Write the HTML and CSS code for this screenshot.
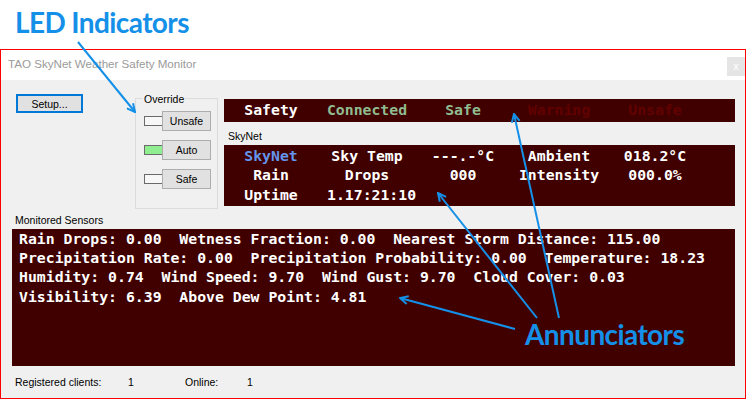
FILE: index.html
```html
<!DOCTYPE html>
<html>
<head>
<meta charset="utf-8">
<link rel="stylesheet" href="styles.css">
</head>
<body>
<div class="header"><h1 class="callout">LED Indicators</h1></div>
<div class="window">
  <div class="titlebar">
    <span class="title">TAO SkyNet Weather Safety Monitor</span>
    <span class="close">x</span>
  </div>
  <div class="client">
    <div class="top">
      <button class="btn setup">Setup...</button>
      <div class="group">
        <div class="group-label">Override</div>
        <div class="rows">
          <div class="row"><span class="led"></span><button class="btn obtn">Unsafe</button></div>
          <div class="row"><span class="led on"></span><button class="btn obtn">Auto</button></div>
          <div class="row"><span class="led"></span><button class="btn obtn">Safe</button></div>
        </div>
      </div>
      <div class="status">
        <div class="panel safety grid5">
          <span class="w">Safety</span>
          <span class="g">Connected</span>
          <span class="g">Safe</span>
          <span class="d">Warning</span>
          <span class="d">Unsafe</span>
        </div>
        <div class="sublabel">SkyNet</div>
        <div class="panel skynet grid5">
          <span class="b">SkyNet</span>
          <span class="w">Sky Temp</span>
          <span class="w">---.-°C</span>
          <span class="w">Ambient</span>
          <span class="w">018.2°C</span>
          <span class="w">Rain</span>
          <span class="w">Drops</span>
          <span class="w">000</span>
          <span class="w">Intensity</span>
          <span class="w">000.0%</span>
          <span class="w">Uptime</span>
          <span class="w nudge">1.17:21:10</span>
        </div>
      </div>
    </div>
    <div class="sensors-label">Monitored Sensors</div>
    <div class="panel sensors">
      <div class="line">Rain Drops: 0.00  Wetness Fraction: 0.00  Nearest Storm Distance: 115.00</div>
      <div class="line">Precipitation Rate: 0.00  Precipitation Probability: 0.00  Temperature: 18.23</div>
      <div class="line">Humidity: 0.74  Wind Speed: 9.70  Wind Gust: 9.70  Cloud Cover: 0.03</div>
      <div class="line">Visibility: 6.39  Above Dew Point: 4.81</div>
    </div>
    <div class="footer">
      <span class="f1">Registered clients:</span>
      <span class="f2">1</span>
      <span class="f3">Online:</span>
      <span>1</span>
    </div>
  </div>
</div>
<svg class="arrows" width="747" height="400" viewBox="0 0 747 400">
  <defs>
    <marker id="ah" viewBox="0 0 10 10" refX="9" refY="5" markerWidth="10" markerHeight="10" markerUnits="userSpaceOnUse" orient="auto">
      <path d="M1,1 L9,5 L1,9" fill="none" stroke="#1490e8" stroke-width="2"/>
    </marker>
  </defs>
  <line x1="78" y1="42" x2="135" y2="112" marker-end="url(#ah)"/>
  <line x1="515" y1="329" x2="400" y2="298" marker-end="url(#ah)"/>
  <line x1="537" y1="318" x2="438" y2="193" marker-end="url(#ah)"/>
  <line x1="559" y1="318" x2="514" y2="114" marker-end="url(#ah)"/>
</svg>
<div class="callout annunciators">Annunciators</div>
</body>
</html>
```
FILE: styles.css
```css
body {
  margin: 0;
  width: 747px;
  height: 400px;
  background: #fff;
  position: relative;
  overflow: hidden;
  font-family: "Liberation Sans", Arial, sans-serif;
}
.callout {
  margin: 0;
  font-family: Lato, "Open Sans", sans-serif;
  font-weight: 700;
  font-size: 28px;
  line-height: 34px;
  color: #1490e8;
  letter-spacing: -0.6px;
}
.header {
  height: 49px;
  box-sizing: border-box;
  padding: 5px 0 0 15px;
}
.window {
  box-sizing: border-box;
  width: 746px;
  height: 350px;
  border: 1px solid #f00;
  display: flex;
  flex-direction: column;
}
.titlebar {
  height: 30px;
  flex: none;
  background: #fff;
  display: flex;
  justify-content: space-between;
  align-items: flex-start;
}
.title {
  padding-left: 7px;
  font-size: 11.6px;
  line-height: 27px;
  color: #9a9a9a;
}
.close {
  margin-top: 7px;
  width: 18px;
  height: 19px;
  background: #e5e5e5;
  color: #fff;
  font-size: 11px;
  line-height: 18px;
  text-align: center;
}
.client {
  flex: 1;
  background: #f0f0f0;
  display: flex;
  flex-direction: column;
  font-size: 10.5px;
  color: #000;
}
.top {
  display: flex;
  align-items: flex-start;
  padding-top: 14px;
}
.btn {
  box-sizing: border-box;
  margin: 0;
  padding: 0;
  background: #e1e1e1;
  border: 1px solid #adadad;
  font-family: "Liberation Sans", Arial, sans-serif;
  font-size: 10.5px;
  color: #000;
}
.setup {
  margin-left: 15px;
  width: 67px;
  height: 19px;
  border: 2px solid #0078d7;
}
.group {
  box-sizing: border-box;
  margin-left: 52px;
  margin-top: 4px;
  width: 83px;
  height: 111px;
  border: 1px solid #dcdcdc;
}
.group-label {
  margin: -6px 0 0 7px;
  padding: 0 1px;
  width: fit-content;
  background: #f0f0f0;
  line-height: 12px;
}
.rows {
  margin-top: 6px;
  display: flex;
  flex-direction: column;
  gap: 9px;
}
.row {
  display: flex;
  align-items: center;
  padding-left: 8px;
}
.led {
  box-sizing: border-box;
  width: 18px;
  height: 10px;
  border: 1px solid #6a6a6a;
  border-right: none;
  background: #f7f7f7;
}
.led.on {
  background: #90ee90;
}
.obtn {
  width: 49px;
  height: 20px;
}
.status {
  margin-left: 6px;
  margin-top: 5px;
  width: 511px;
}
.panel {
  background: #400000;
  color: #fff;
  font-family: "DejaVu Sans Mono", "Liberation Mono", monospace;
  font-weight: 700;
  font-size: 14.8px;
}
.grid5 {
  display: grid;
  grid-template-columns: repeat(5, 96px);
  text-align: center;
}
.grid5 > span {
  margin-left: -2px;
  white-space: nowrap;
}
.safety {
  height: 23px;
  line-height: 21px;
}
.sublabel {
  padding: 6px 0 0 4px;
  line-height: 17px;
}
.skynet {
  padding: 1px 0 2px;
  line-height: 19.3px;
}
.w { color: #fff; }
.g { color: #8fbc8f; }
.d { color: #620000; }
.b { color: #6495ed; }
.nudge { padding-left: 9px; }
.sensors-label {
  padding: 3px 0 1px 14px;
  line-height: 16px;
}
.sensors {
  box-sizing: border-box;
  margin-left: 11px;
  width: 723px;
  height: 137px;
  padding: 0 7px;
  line-height: 19.2px;
  font-size: 14.8px;
}
.line {
  white-space: pre;
}
.footer {
  display: flex;
  padding: 8px 0 0 14px;
  line-height: 16px;
}
.f1 { width: 113px; }
.f2 { width: 57px; }
.f3 { width: 62px; }
.arrows {
  position: absolute;
  left: 0;
  top: 0;
  pointer-events: none;
}
.arrows line {
  stroke: #1490e8;
  stroke-width: 2;
}
.annunciators {
  position: absolute;
  left: 525px;
  top: 317px;
}
```
